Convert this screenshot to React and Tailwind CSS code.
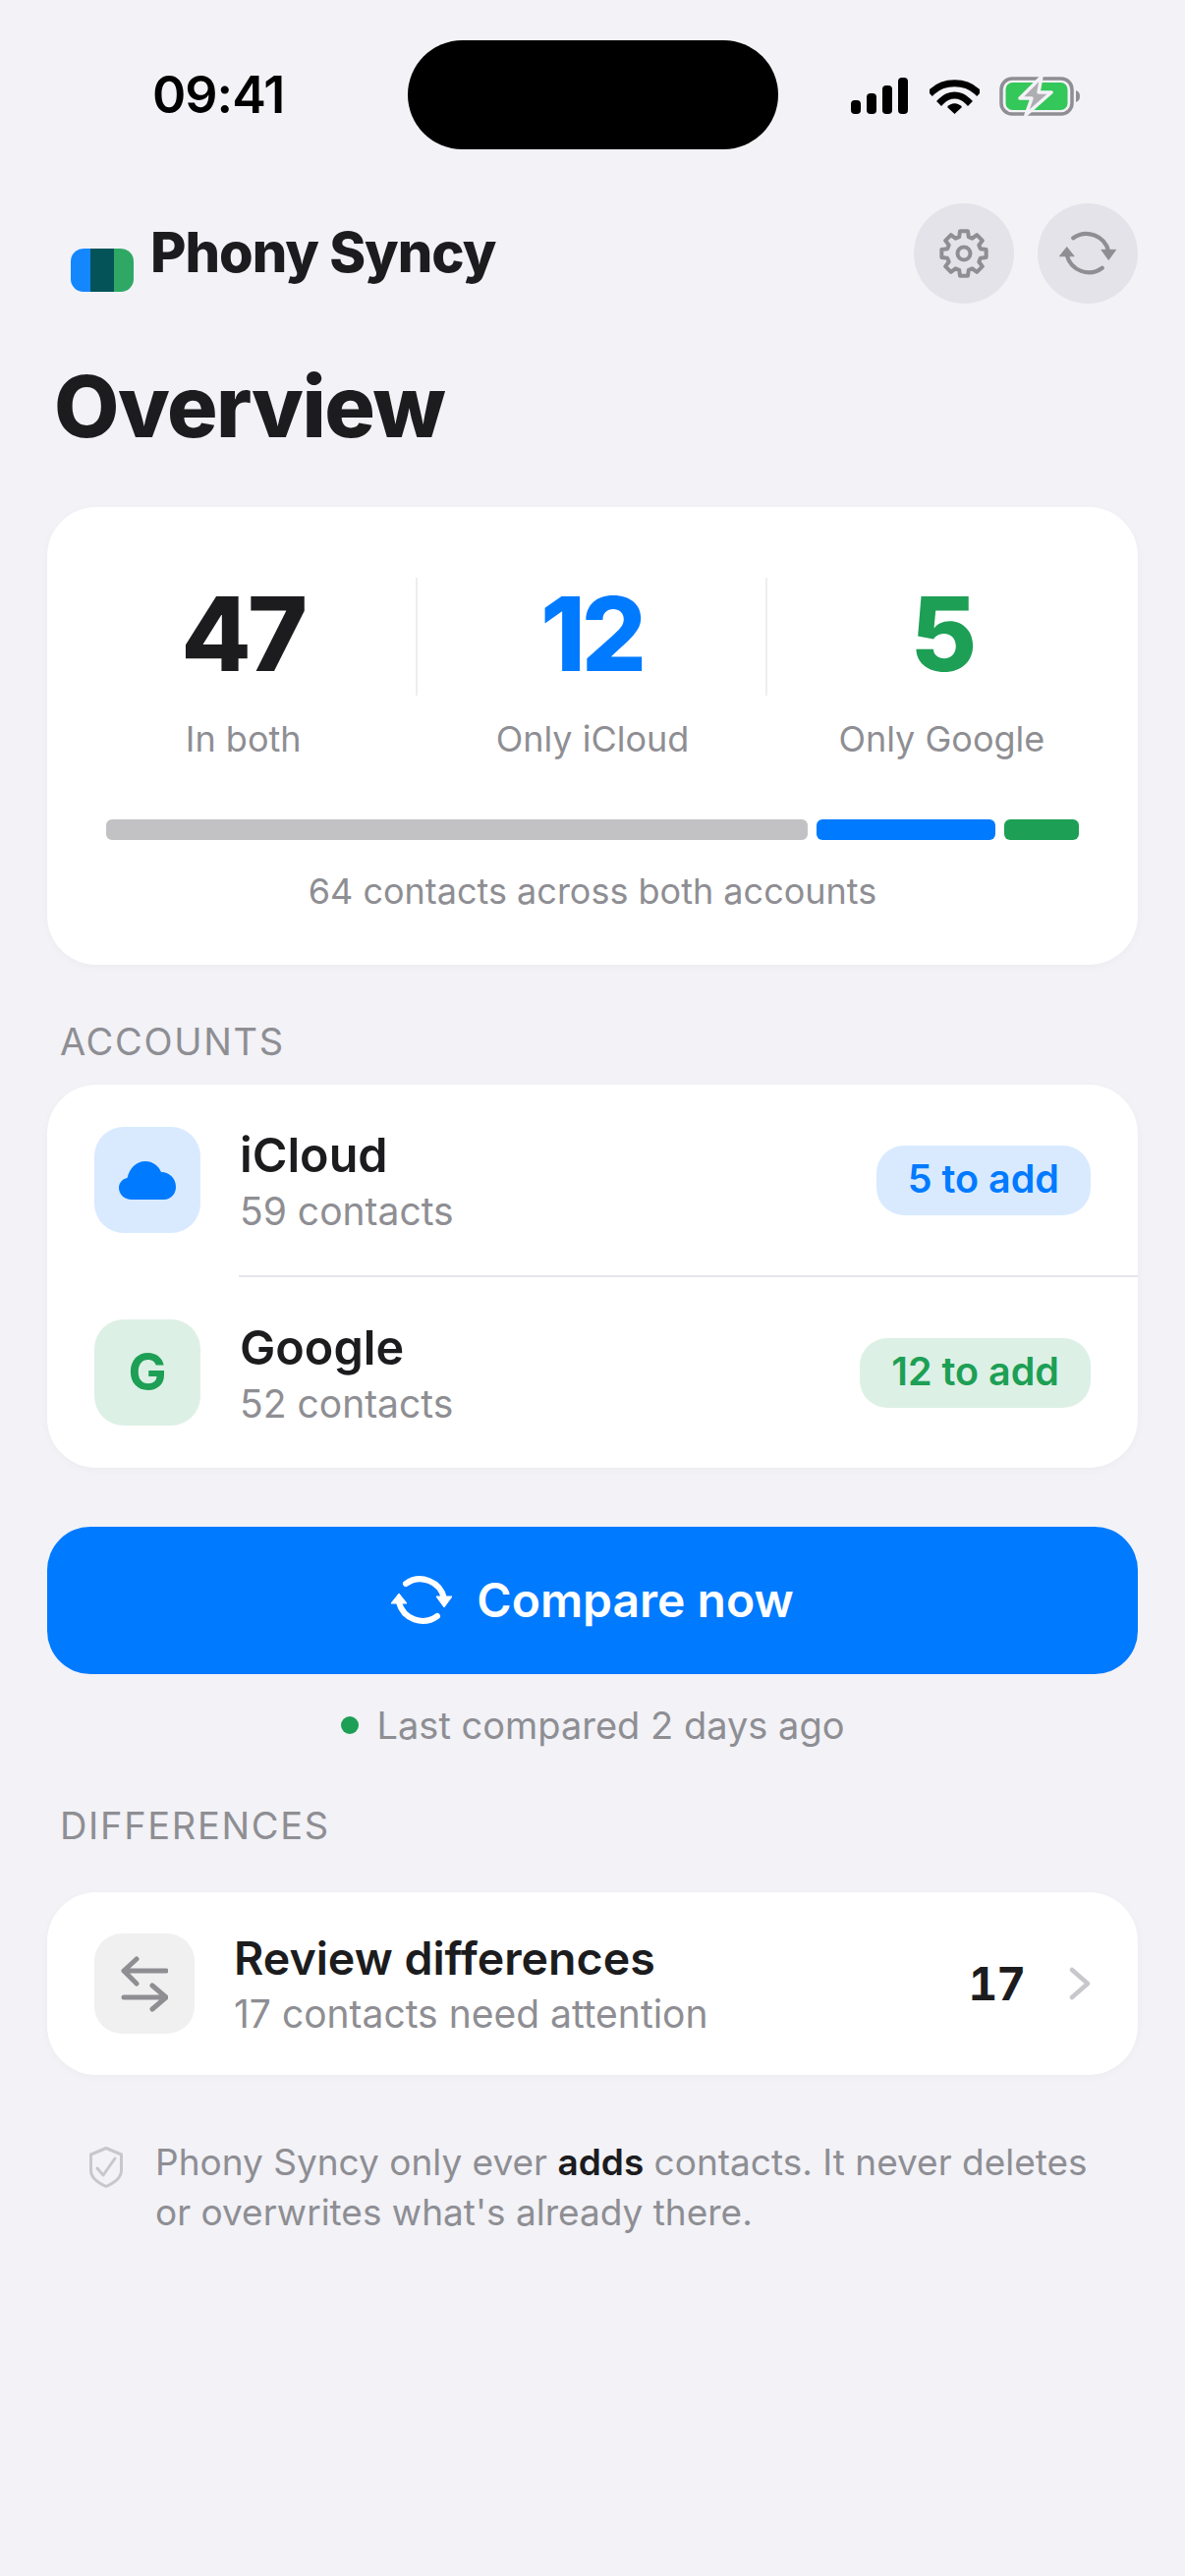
import React from "react";

// 8 teeth, first one pointing straight up
const gearPath =
  Array.from({ length: 8 })
    .flatMap((_, i) => {
      const a = i * 45 - 90;
      return [
        [17.5, a - 16],
        [23, a - 10],
        [23, a + 10],
        [17.5, a + 16],
      ];
    })
    .map(([r, deg], i) => {
      const rad = (deg * Math.PI) / 180;
      return `${i === 0 ? "M" : "L"}${(25 + r * Math.cos(rad)).toFixed(2)} ${(25 + r * Math.sin(rad)).toFixed(2)}`;
    })
    .join("") + "Z";

function SyncIcon({ color, stroke, className }) {
  return (
    <svg viewBox="0 0 62 52" className={className} fill="none">
      <path d="M15 9A25 25 0 0 1 54 24M47 42A25 25 0 0 1 8 28" stroke={color} strokeWidth={stroke} strokeLinecap="round" />
      <path d="M46 22H62L54 33ZM0 29H16L8 19Z" fill={color} stroke={color} strokeWidth="1" strokeLinejoin="round" />
    </svg>
  );
}

function StatusIcons() {
  return (
    <div className="flex items-center self-start h-[41px] ml-[74px] mt-[36px]">
      <svg viewBox="0 0 58 37" className="w-[58px] h-[37px]" fill="#000">
        <rect x="0" y="23" width="10" height="14" rx="4" />
        <rect x="16" y="16" width="10" height="21" rx="4" />
        <rect x="32" y="8" width="10" height="29" rx="4" />
        <rect x="48" y="0" width="10" height="37" rx="4" />
      </svg>
      <svg viewBox="0 0 51 37" className="w-[51px] h-[37px] ml-[22px]" fill="none">
        <path d="M3 14C15 3 36 3 48 14" stroke="#000" strokeWidth="7" strokeLinecap="square" />
        <path d="M12 24C20 16 31 16 39 24" stroke="#000" strokeWidth="7" strokeLinecap="square" />
        <path d="M18 30C22 25 29 25 33 30L25.5 37Z" fill="#000" />
      </svg>
      <svg viewBox="0 0 84 41" className="w-[84px] h-[41px] ml-[20px]" fill="none">
        <rect x="2" y="3" width="72" height="36" rx="11" stroke="#8e8e93" strokeWidth="3.5" />
        <rect x="6.5" y="7" width="63" height="28" rx="7" fill="#34c759" />
        <path d="M78 15C81 16 82 18 82 21C82 24 81 26 78 27Z" fill="#8e8e93" />
        <path d="M43 1L21 23H33L27 40L53 17H40Z" fill="#aeaeb2" stroke="#f2f2f7" strokeWidth="3.5" strokeLinejoin="round" />
      </svg>
    </div>
  );
}

function SectionLabel({ children }) {
  return <div className="pl-[13px] text-[38px] leading-[44px] tracking-[1.7px] text-[#8e8e93]">{children}</div>;
}

function AccountRow({ icon, iconBg, name, count, badge, badgeClass }) {
  return (
    <div className="flex items-center justify-between h-[194px] px-[48px]">
      <div className="flex items-center gap-[40px]">
        <div className={`w-[108px] h-[108px] rounded-[30px] flex items-center justify-center ${iconBg}`}>{icon}</div>
        <div>
          <div className="text-[48.5px] leading-[56px] font-semibold text-[#1c1c1e]">{name}</div>
          <div className="mt-[7px] text-[39px] leading-[44px] text-[#8e8e93]">{count}</div>
        </div>
      </div>
      <div className={`h-[71px] px-[32px] rounded-[28px] flex items-center text-[39.5px] font-semibold ${badgeClass}`}>{badge}</div>
    </div>
  );
}

function Stat({ value, label, color, divider }) {
  return (
    <div className="flex flex-col items-center">
      <div className={`w-full h-[120px] pb-[6px] flex items-center justify-center text-[104px] leading-none font-extrabold tracking-[-4px] ${color} ${divider ? "border-r-2 border-[#eeeef0]" : ""}`}>
        {value}
      </div>
      <div className="mt-[22px] text-[36px] leading-[44px] text-[#8e8e93]">{label}</div>
    </div>
  );
}

export default function App() {
  return (
    <div className="w-[1206px] h-[2622px] bg-[#f2f2f7] overflow-hidden font-['Inter',sans-serif]">
      {/* status bar */}
      <div className="flex pt-[41px] pl-[155px]">
        <div className="w-[260px] text-[52px] leading-[111px] font-semibold tracking-[-1px] text-black">09:41</div>
        <div className="w-[377px] h-[111px] rounded-[56px] bg-black" />
        <StatusIcons />
      </div>

      <div className="px-[48px]">
        {/* header */}
        <div className="mt-[55px] flex items-start justify-between">
          <div className="flex items-start pl-[24px]">
            <div className="mt-[46px] flex w-[64px] h-[44px] rounded-[13px] overflow-hidden">
              <div className="w-[20px] bg-[#1487ff]" />
              <div className="w-[24px] bg-[#045359]" />
              <div className="w-[20px] bg-[#2fa865]" />
            </div>
            <div className="ml-[17px] mt-[18px] text-[56px] leading-[64px] font-extrabold tracking-[-1px] text-[#1c1c1e]">Phony Syncy</div>
          </div>
          <div className="flex gap-[24px]">
            <div className="w-[102px] h-[102px] rounded-full bg-[#e3e3e9] flex items-center justify-center">
              <svg viewBox="0 0 50 50" className="w-[50px] h-[50px]" fill="none" stroke="#8e8e93" strokeWidth="4" strokeLinejoin="round">
                <path d={gearPath} />
                <circle cx="25" cy="25" r="6.5" />
              </svg>
            </div>
            <div className="w-[102px] h-[102px] rounded-full bg-[#e3e3e9] flex items-center justify-center">
              <SyncIcon color="#8e8e93" stroke={4.5} className="w-[58px] h-[48px]" />
            </div>
          </div>
        </div>

        <h1 className="mt-[55px] pl-[7px] text-[86px] leading-[100px] font-extrabold tracking-[-1.5px] text-[#1c1c1e]">Overview</h1>

        {/* totals */}
        <div className="mt-[52px] h-[466px] bg-white rounded-[50px] shadow-[0_2px_8px_rgba(0,0,0,0.03)] px-[22px] pt-[72px]">
          <div className="grid grid-cols-3">
            <Stat value="47" label="In both" color="text-[#1c1c1e]" divider />
            <Stat value="12" label="Only iCloud" color="text-[#007aff]" divider />
            <Stat value="5" label="Only Google" color="text-[#1d9f55]" />
          </div>
          <div className="mt-[60px] mx-[38px] flex gap-[9px] h-[21px]">
            <div className="w-[714px] rounded-[6px] bg-[#c2c2c4]" />
            <div className="w-[182px] rounded-[6px] bg-[#007aff]" />
            <div className="w-[76px] rounded-[6px] bg-[#1d9f55]" />
          </div>
          <div className="mt-[30px] text-center text-[36px] leading-[44px] text-[#8e8e93]">64 contacts across both accounts</div>
        </div>

        <div className="mt-[56px]">
          <SectionLabel>ACCOUNTS</SectionLabel>
        </div>
        <div className="mt-[22px] bg-white rounded-[50px] shadow-[0_2px_8px_rgba(0,0,0,0.03)]">
          <AccountRow
            iconBg="bg-[#d9eaff]"
            icon={
              <svg viewBox="0 0 58 39" className="w-[58px] h-[39px]" fill="#007aff">
                <path d="M13 39C5.5 39 0 33.5 0 27C0 22 3.5 18 8.5 17C10.5 7 18 0 27 0C34 0 40 4 43 11C52 11 58 18 58 26C58 33.5 52.5 39 46 39Z" />
              </svg>
            }
            name="iCloud"
            count="59 contacts"
            badge="5 to add"
            badgeClass="bg-[#d9eaff] text-[#007aff]"
          />
          <div className="ml-[195px] h-[2px] bg-[#e5e5ea]" />
          <AccountRow
            iconBg="bg-[#ddf0e5]"
            icon={<span className="text-[52px] font-bold text-[#1d9f55]">G</span>}
            name="Google"
            count="52 contacts"
            badge="12 to add"
            badgeClass="bg-[#ddf0e5] text-[#1d9f55]"
          />
        </div>

        <button className="mt-[60px] w-full h-[150px] rounded-[44px] bg-[#007aff] flex items-center justify-center gap-[25px] text-[48px] font-semibold text-white">
          <SyncIcon color="#fff" stroke={6} className="w-[62px] h-[52px]" />
          Compare now
        </button>

        <div className="mt-[30px] flex items-center justify-center gap-[19px] text-[38px] leading-[44px] text-[#8e8e93]">
          <span className="w-[18px] h-[18px] rounded-full bg-[#1d9f55]" />
          Last compared 2 days ago
        </div>

        <div className="mt-[58px]">
          <SectionLabel>DIFFERENCES</SectionLabel>
        </div>

        <div className="mt-[46px] h-[186px] bg-white rounded-[50px] shadow-[0_2px_8px_rgba(0,0,0,0.03)] px-[48px] flex items-center justify-between">
          <div className="flex items-center gap-[40px]">
            <div className="w-[102px] h-[102px] rounded-[28px] bg-[#f0f0f0] flex items-center justify-center">
              <svg viewBox="0 0 48 58" className="w-[48px] h-[58px]" fill="none" stroke="#8e8e93" strokeWidth="5" strokeLinecap="round" strokeLinejoin="round">
                <path d="M46 16H3M16 4L3 16L16 29" />
                <path d="M3 43H46M32 31L46 43L32 55" />
              </svg>
            </div>
            <div>
              <div className="text-[46.5px] leading-[54px] font-semibold text-[#1c1c1e]">Review differences</div>
              <div className="mt-[8px] text-[39px] leading-[44px] text-[#8e8e93]">17 contacts need attention</div>
            </div>
          </div>
          <div className="flex items-center">
            <span className="text-[46px] font-bold tracking-[-1px] tabular-nums text-[#1c1c1e]">17</span>
            <svg viewBox="0 0 22 34" className="w-[22px] h-[34px] ml-[45px]" fill="none" stroke="#c7c7cc" strokeWidth="4.5" strokeLinecap="round" strokeLinejoin="round">
              <path d="M3 3L19 17L3 31" />
            </svg>
          </div>
        </div>

        {/* note */}
        <div className="mt-[63px] pl-[43px] flex gap-[33px]">
          <svg viewBox="0 0 34 42" className="w-[34px] h-[42px] mt-[10px] shrink-0" fill="none" stroke="#c7c7cc" strokeWidth="3" strokeLinejoin="round" strokeLinecap="round">
            <path d="M17 1.5L32.5 8V24C32.5 32 25 37 17 40.5C9 37 1.5 32 1.5 24V8Z" />
            <path d="M8 22L14 29L26 12" />
          </svg>
          <p className="w-[960px] text-[37px] leading-[51px] text-[#8e8e93]">
            Phony Syncy only ever <span className="font-semibold text-[#1c1c1e]">adds</span> contacts. It never deletes or overwrites what's already there.
          </p>
        </div>
      </div>
    </div>
  );
}
